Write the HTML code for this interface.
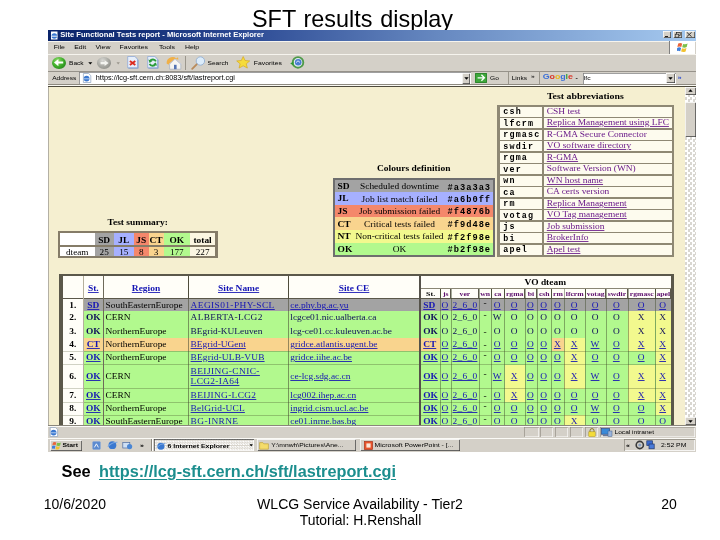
<!DOCTYPE html>
<html><head><meta charset="utf-8"><title>SFT results display</title>
<style>
html,body{margin:0;padding:0;background:#fff;}
body{width:720px;height:540px;position:relative;overflow:hidden;color:#000;}
#wrap{position:absolute;left:0;top:0;width:720px;height:540px;will-change:transform;}
#shot{position:absolute;left:0;top:0;width:720px;height:540px;filter:blur(0.4px);}
.r{position:absolute;display:block;}
.t{position:absolute;white-space:nowrap;line-height:1;margin:0;padding:0;}
.sans{font-family:"Liberation Sans",sans-serif;}
.serif{font-family:"Liberation Serif",serif;}
.mono{font-family:"Liberation Mono",monospace;}
.b{font-weight:bold;}
.u{text-decoration:underline;text-decoration-thickness:0.8px;text-underline-offset:0.8px;}

.sq{transform:scaleY(0.872);}
#lnk{text-decoration-thickness:1.3px;text-underline-offset:1.5px;}
</style></head><body>
<div id="wrap">
<div class="t sans" id="title" style="left:252.0px;top:7.79px;font-size:23.4px;word-spacing:1.3px;">SFT results display</div>
<div id="shot">
<div class="r" style="left:48.00px;top:30.00px;width:647.60px;height:422.00px;background:#d4d0c8;"></div>
<div class="r" style="left:48.00px;top:30.00px;width:647.60px;height:10.50px;background:linear-gradient(90deg,#0a246a 0%,#16327a 15%,#2c4a94 30%,#6688c0 60%,#a6caf0 100%);"></div>
<svg class="r" style="left:50px;top:31px" width="9" height="9" viewBox="0 0 9 9"><rect x="1" y="0.5" width="6.5" height="8" fill="#fff"/><circle cx="4.3" cy="5" r="2.8" fill="#3a78d0"/><path d="M1 5.2h6.5" stroke="#fff" stroke-width="0.9"/></svg>
<div class="t sans b sq" style="left:60.30px;top:31.17px;font-size:7.6px;color:#fff;transform-origin:0 6.43px;">Site Functional Tests report - Microsoft Internet Explorer</div>
<div class="r" style="left:663.00px;top:31.30px;width:8.30px;height:6.90px;background:#d4d0c8;box-shadow:inset 0.7px 0.7px 0 #fff, inset -0.7px -0.7px 0 #404040;"></div>
<div class="r" style="left:673.30px;top:31.30px;width:9.20px;height:6.90px;background:#d4d0c8;box-shadow:inset 0.7px 0.7px 0 #fff, inset -0.7px -0.7px 0 #404040;"></div>
<div class="r" style="left:684.50px;top:31.30px;width:10.00px;height:6.90px;background:#d4d0c8;box-shadow:inset 0.7px 0.7px 0 #fff, inset -0.7px -0.7px 0 #404040;"></div>
<div class="r" style="left:665.00px;top:35.60px;width:3.00px;height:1.00px;background:#222;"></div>
<svg class="r" style="left:674.3px;top:32px" width="8" height="6" viewBox="0 0 8 6"><rect x="2.6" y="0.5" width="3.6" height="3" fill="none" stroke="#222" stroke-width="0.7"/><rect x="1.2" y="2.2" width="3.6" height="3" fill="#d4d0c8" stroke="#222" stroke-width="0.7"/></svg>
<svg class="r" style="left:686.3px;top:32.3px" width="7" height="5" viewBox="0 0 7 5"><path d="M0.8 0.3L5.6 4.7M5.6 0.3L0.8 4.7" stroke="#222" stroke-width="0.9"/></svg>
<div class="r" style="left:48.00px;top:40.50px;width:647.60px;height:1.00px;background:#f6f4ee;"></div>
<div class="t sans sq" style="left:53.70px;top:44.33px;font-size:6.93px;transform-origin:0 5.87px;">File</div>
<div class="t sans sq" style="left:74.20px;top:44.33px;font-size:6.93px;transform-origin:0 5.87px;">Edit</div>
<div class="t sans sq" style="left:95.60px;top:44.33px;font-size:6.93px;transform-origin:0 5.87px;">View</div>
<div class="t sans sq" style="left:119.60px;top:44.33px;font-size:6.93px;transform-origin:0 5.87px;">Favorites</div>
<div class="t sans sq" style="left:158.90px;top:44.33px;font-size:6.93px;transform-origin:0 5.87px;">Tools</div>
<div class="t sans sq" style="left:184.90px;top:44.33px;font-size:6.93px;transform-origin:0 5.87px;">Help</div>
<div class="r" style="left:668.60px;top:41.30px;width:0.90px;height:12.40px;background:#808080;"></div>
<div class="r" style="left:669.50px;top:41.30px;width:25.50px;height:12.40px;background:#fff;"></div>
<svg class="r" style="left:676.5px;top:42.3px" width="12" height="10.5" viewBox="0 0 12 10.5"><path d="M1.2 1.6Q3 0.4 5.2 1.5L4.3 5Q2.4 3.9 0.4 5Z" fill="#e8653a"/><path d="M6.1 1.9Q8.2 2.9 10.6 1.6L9.7 5.1Q7.4 6.3 5.2 5.3Z" fill="#7cc04a"/><path d="M0.2 5.9Q2.2 4.8 4.1 5.9L3.2 9.3Q1.3 8.2 -0.6 9.3Z" fill="#3f7fdc"/><path d="M5 6.2Q7.2 7.2 9.5 6L8.6 9.4Q6.3 10.6 4.1 9.6Z" fill="#f2c230"/></svg>
<div class="r" style="left:48.00px;top:54.00px;width:647.60px;height:1.00px;background:#f6f4ee;"></div>
<div class="r" style="left:51.50px;top:56.55px;width:14.40px;height:12.60px;background:radial-gradient(ellipse at 40% 30%,#8fdc6a 0%,#3fae2a 48%,#1a6e16 100%);border-radius:50%;"></div>
<svg class="r" style="left:51px;top:56.3px" width="16" height="14" viewBox="0 0 16 16" preserveAspectRatio="none"><path d="M3 7.5L7.4 3.4V6.3H12.2V8.7H7.4V11.6Z" fill="#fff"/></svg>
<div class="t sans sq" style="left:69.00px;top:59.81px;font-size:6.6px;transform-origin:0 5.59px;">Back</div>
<svg class="r" style="left:88.2px;top:62px" width="5" height="3" viewBox="0 0 5 3"><path d="M0.3 0.2H4.3L2.3 2.6Z" fill="#000"/></svg>
<div class="r" style="left:97.00px;top:57.10px;width:14.20px;height:11.60px;background:radial-gradient(ellipse at 40% 30%,#d8d8d4 0%,#a8a8a2 50%,#7e7e78 100%);border-radius:50%;"></div>
<svg class="r" style="left:96.6px;top:56.8px" width="16" height="13" viewBox="0 0 16 16" preserveAspectRatio="none"><path d="M11.6 7.5L7.6 3.9V6.2H3.6V8.8H7.6V11.1Z" fill="#f4f4f0"/></svg>
<svg class="r" style="left:116px;top:62px" width="5" height="3" viewBox="0 0 5 3"><path d="M0.5 0.3H3.9L2.2 2.4Z" fill="#9a968c"/></svg>
<svg class="r" style="left:127px;top:56.2px" width="12" height="13" viewBox="0 0 12 13"><path d="M1.4 1.2H8.6L11.4 4V12.6H1.4Z" fill="#6f8fca"/><path d="M0.7 0.5H7.9L10.6 3.2V11.8H0.7Z" fill="#e6eefa" stroke="#86a4d6" stroke-width="0.7"/><path d="M2.9 4.9L8.3 8.9M8.3 4.9L2.9 8.9" stroke="#dc2a1e" stroke-width="1.9"/></svg>
<svg class="r" style="left:147px;top:56.2px" width="12" height="13" viewBox="0 0 12 13"><path d="M1.4 1.2H8.6L11.4 4V12.6H1.4Z" fill="#6f8fca"/><path d="M0.7 0.5H7.9L10.6 3.2V11.8H0.7Z" fill="#e6eefa" stroke="#86a4d6" stroke-width="0.7"/><path d="M8.9 5.4A3.3 3.3 0 0 0 3 5.2M2.6 7.8A3.3 3.3 0 0 0 8.5 8" stroke="#2a9c3a" stroke-width="1.9" fill="none"/><path d="M1.4 3.6L2.6 6.9L5.4 5Z M10 9.7L8.9 6.4L6.1 8.2Z" fill="#2a9c3a"/></svg>
<svg class="r" style="left:165.5px;top:55.6px" width="16" height="14" viewBox="0 0 16 14"><path d="M0.6 7.4Q0.4 2.6 5 1.2Q8.4 0.4 10.2 2.4L12 1.2L12.4 3.6L8.6 3.2L2.6 8.8Z" fill="#f0b048"/><path d="M3.6 8L9 3.2L14.8 8V13.2H3.6Z" fill="#f6f6f2" stroke="#9aa6bc" stroke-width="0.6"/><rect x="8" y="8.8" width="2.6" height="4.4" fill="#5474b4"/><path d="M2.8 8.6L9 3L15.4 8.4" stroke="#c8cede" stroke-width="1" fill="none"/></svg>
<div class="r" style="left:185.20px;top:56.00px;width:0.80px;height:14.00px;background:#9a968c;"></div>
<svg class="r" style="left:190.5px;top:55.8px" width="15" height="14" viewBox="0 0 15 14"><path d="M1.2 12.8L6.4 7.6" stroke="#b98a5a" stroke-width="1.8" stroke-linecap="round"/><circle cx="9.4" cy="5" r="4.2" fill="#dcecfa" stroke="#9ab4d4" stroke-width="1"/></svg>
<div class="t sans sq" style="left:207.50px;top:59.81px;font-size:6.6px;transform-origin:0 5.59px;">Search</div>
<svg class="r" style="left:236px;top:56px" width="14.4" height="12.6" viewBox="0 0 16 14" preserveAspectRatio="none"><path d="M8 0.6L10.1 5L15.2 5.5L11.4 8.7L12.6 13.4L8 10.9L3.4 13.4L4.6 8.7L0.8 5.5L5.9 5Z" fill="#f6dc3c" stroke="#d8aa20" stroke-width="0.8"/></svg>
<div class="t sans sq" style="left:253.80px;top:59.60px;font-size:6.85px;transform-origin:0 5.80px;">Favorites</div>
<svg class="r" style="left:289.5px;top:56.3px" width="16" height="13" viewBox="0 0 16 13"><circle cx="8" cy="6.4" r="5.3" fill="#e4ecf4" stroke="#4f9a4a" stroke-width="1.9"/><path d="M3.4 9.4L0.2 7.4L3.6 5.4Z" fill="#2e9a34"/><circle cx="8.2" cy="6.2" r="3.3" fill="#4a7ed0"/><path d="M6 6.6l2-1.8l2 1.6" stroke="#fff" stroke-width="0.8" fill="none"/></svg>
<div class="r" style="left:48.00px;top:71.00px;width:647.60px;height:1.00px;background:#96928a;"></div>
<div class="t sans sq" style="left:52.20px;top:75.21px;font-size:6.6px;transform-origin:0 5.59px;">Address</div>
<div class="r" style="left:79.00px;top:72.20px;width:392.00px;height:11.80px;background:#fff;box-shadow:inset 0.8px 0.8px 0 #808080;"></div>
<svg class="r" style="left:81.5px;top:73.3px" width="10" height="10" viewBox="0 0 10 10"><path d="M1.4 0.5H6.6L8.8 2.6V9.5H1.4Z" fill="#fff" stroke="#8aa0c0" stroke-width="0.7"/><circle cx="4.6" cy="5.6" r="2.9" fill="#3a78d0"/><path d="M1.6 5.8h6" stroke="#cfe0f6" stroke-width="0.8"/></svg>
<div class="t sans sq" style="left:95.80px;top:74.42px;font-size:7.3px;transform-origin:0 6.18px;">https://lcg-sft.cern.ch:8083/sft/lastreport.cgi</div>
<div class="r" style="left:461.70px;top:73.00px;width:8.70px;height:10.60px;background:#d4d0c8;box-shadow:inset 0.7px 0.7px 0 #fff, inset -0.7px -0.7px 0 #404040;"></div>
<svg class="r" style="left:463.6px;top:77px" width="5" height="3" viewBox="0 0 5 3"><path d="M0.3 0.2H4.7L2.5 2.8Z" fill="#000"/></svg>
<div class="r" style="left:475.30px;top:72.60px;width:11.70px;height:10.80px;background:#3fa83c;border-radius:1px;box-shadow:inset 0 0 0 0.7px #2a7a2a;"></div>
<svg class="r" style="left:477px;top:74.3px" width="9" height="8" viewBox="0 0 9 8"><path d="M0.6 3.8H7M4.4 0.8L7.4 3.8L4.4 6.8" stroke="#fff" stroke-width="1.3" fill="none"/></svg>
<div class="t sans sq" style="left:490.00px;top:75.21px;font-size:6.6px;transform-origin:0 5.59px;">Go</div>
<div class="r" style="left:508.00px;top:72.30px;width:0.80px;height:12.00px;background:#9a968c;"></div>
<div class="t sans sq" style="left:511.70px;top:75.21px;font-size:6.6px;transform-origin:0 5.59px;">Links</div>
<div class="t sans sq" style="left:531.00px;top:73.01px;font-size:6.6px;transform-origin:0 5.59px;">»</div>
<div class="r" style="left:539.30px;top:72.30px;width:0.80px;height:12.00px;background:#9a968c;"></div>
<div class="t sans b" style="left:542.8px;top:72.07px;font-size:8.9px;transform:scaleY(0.9);transform-origin:0 7.53px;letter-spacing:-0.1px"><span style="color:#3a6fd8">G</span><span style="color:#d8382c">o</span><span style="color:#e8b820">o</span><span style="color:#3a6fd8">g</span><span style="color:#3aa040">l</span><span style="color:#d8382c">e</span></div>
<div class="t sans b sq" style="left:575.60px;top:74.07px;font-size:7px;transform-origin:0 5.93px;">-</div>
<div class="r" style="left:582.50px;top:72.50px;width:93.00px;height:11.30px;background:#fff;box-shadow:inset 0.8px 0.8px 0 #808080;"></div>
<div class="t sans sq" style="left:583.80px;top:74.84px;font-size:6.8px;transform-origin:0 5.76px;">lfc</div>
<div class="r" style="left:666.30px;top:73.20px;width:8.70px;height:10.20px;background:#d4d0c8;box-shadow:inset 0.7px 0.7px 0 #fff, inset -0.7px -0.7px 0 #404040;"></div>
<svg class="r" style="left:668.2px;top:77px" width="5" height="3" viewBox="0 0 5 3"><path d="M0.3 0.2H4.7L2.5 2.8Z" fill="#000"/></svg>
<div class="t sans b sq" style="left:677.80px;top:74.24px;font-size:6.8px;color:#2a4ad0;transform-origin:0 5.76px;">»</div>
<div class="r" style="left:48.00px;top:84.00px;width:647.60px;height:0.90px;background:#8e8a80;"></div>
<div class="r" style="left:48.00px;top:84.90px;width:647.60px;height:1.10px;background:#fbfaf4;"></div>
<div class="r" style="left:48.00px;top:86.00px;width:647.60px;height:1.00px;background:#4e4a3c;"></div>
<div class="r" style="left:49.30px;top:87.00px;width:636.00px;height:338.20px;background:#f5efd0;"></div>
<div class="r" style="left:48.00px;top:87.00px;width:1.30px;height:338.20px;background:#b4b0a4;"></div>
<div class="r" style="left:685.30px;top:87.00px;width:10.30px;height:338.20px;background:#e9e7e1;background-image:repeating-conic-gradient(#ffffff 0% 25%, #d9d7d1 0% 50%);background-size:5px 5px;"></div>
<div class="r" style="left:685.30px;top:87.30px;width:10.30px;height:7.60px;background:#d4d0c8;box-shadow:inset 0.7px 0.7px 0 #fff, inset -0.7px -0.7px 0 #404040;"></div>
<div class="r" style="left:685.30px;top:417.40px;width:10.30px;height:7.60px;background:#d4d0c8;box-shadow:inset 0.7px 0.7px 0 #fff, inset -0.7px -0.7px 0 #404040;"></div>
<svg class="r" style="left:687.7px;top:89.3px" width="5" height="3" viewBox="0 0 5 3"><path d="M0.3 2.8H4.7L2.5 0.2Z" fill="#000"/></svg>
<svg class="r" style="left:687.7px;top:420px" width="5" height="3" viewBox="0 0 5 3"><path d="M0.3 0.2H4.7L2.5 2.8Z" fill="#000"/></svg>
<div class="r" style="left:685.30px;top:102.40px;width:10.30px;height:35.10px;background:#d4d0c8;box-shadow:inset 0.7px 0.7px 0 #fff, inset -0.7px -0.7px 0 #404040;"></div>
<div class="t serif b sq" style="left:546.90px;top:90.64px;font-size:9.86px;transform-origin:0 8.26px;">Test abbreviations</div>
<div class="r" style="left:496.70px;top:104.60px;width:177.60px;height:152.60px;background:#8e8874;"></div>
<div class="r" style="left:499.60px;top:106.60px;width:42.10px;height:10.20px;background:#fdfbee;"></div>
<div class="r" style="left:543.70px;top:106.60px;width:128.50px;height:10.20px;background:#fdfbee;"></div>
<div class="t mono b" style="left:503.20px;top:108.46px;font-size:8.4px;letter-spacing:1.2px;">csh</div>
<div class="t serif sq" style="left:546.80px;top:106.83px;font-size:9.4px;color:#6a1a8a;transform-origin:0 7.87px;">CSH test</div>
<div class="r" style="left:499.60px;top:118.10px;width:42.10px;height:10.20px;background:#fdfbee;"></div>
<div class="r" style="left:543.70px;top:118.10px;width:128.50px;height:10.20px;background:#fdfbee;"></div>
<div class="t mono b" style="left:503.20px;top:119.96px;font-size:8.4px;letter-spacing:1.2px;">lfcrm</div>
<div class="t serif u sq" style="left:546.80px;top:118.33px;font-size:9.4px;color:#6a1a8a;transform-origin:0 7.87px;">Replica Management using LFC</div>
<div class="r" style="left:499.60px;top:129.60px;width:42.10px;height:10.20px;background:#fdfbee;"></div>
<div class="r" style="left:543.70px;top:129.60px;width:128.50px;height:10.20px;background:#fdfbee;"></div>
<div class="t mono b" style="left:503.20px;top:131.46px;font-size:8.4px;letter-spacing:1.2px;">rgmasc</div>
<div class="t serif sq" style="left:546.80px;top:129.83px;font-size:9.4px;color:#6a1a8a;transform-origin:0 7.87px;">R-GMA Secure Connector</div>
<div class="r" style="left:499.60px;top:141.10px;width:42.10px;height:10.20px;background:#fdfbee;"></div>
<div class="r" style="left:543.70px;top:141.10px;width:128.50px;height:10.20px;background:#fdfbee;"></div>
<div class="t mono b" style="left:503.20px;top:142.96px;font-size:8.4px;letter-spacing:1.2px;">swdir</div>
<div class="t serif u sq" style="left:546.80px;top:141.33px;font-size:9.4px;color:#6a1a8a;transform-origin:0 7.87px;">VO software directory</div>
<div class="r" style="left:499.60px;top:152.60px;width:42.10px;height:10.20px;background:#fdfbee;"></div>
<div class="r" style="left:543.70px;top:152.60px;width:128.50px;height:10.20px;background:#fdfbee;"></div>
<div class="t mono b" style="left:503.20px;top:154.46px;font-size:8.4px;letter-spacing:1.2px;">rgma</div>
<div class="t serif u sq" style="left:546.80px;top:152.83px;font-size:9.4px;color:#6a1a8a;transform-origin:0 7.87px;">R-GMA</div>
<div class="r" style="left:499.60px;top:164.10px;width:42.10px;height:10.20px;background:#fdfbee;"></div>
<div class="r" style="left:543.70px;top:164.10px;width:128.50px;height:10.20px;background:#fdfbee;"></div>
<div class="t mono b" style="left:503.20px;top:165.96px;font-size:8.4px;letter-spacing:1.2px;">ver</div>
<div class="t serif sq" style="left:546.80px;top:164.33px;font-size:9.4px;color:#6a1a8a;transform-origin:0 7.87px;">Software Version (WN)</div>
<div class="r" style="left:499.60px;top:175.60px;width:42.10px;height:10.20px;background:#fdfbee;"></div>
<div class="r" style="left:543.70px;top:175.60px;width:128.50px;height:10.20px;background:#fdfbee;"></div>
<div class="t mono b" style="left:503.20px;top:177.46px;font-size:8.4px;letter-spacing:1.2px;">wn</div>
<div class="t serif u sq" style="left:546.80px;top:175.83px;font-size:9.4px;color:#6a1a8a;transform-origin:0 7.87px;">WN host name</div>
<div class="r" style="left:499.60px;top:187.10px;width:42.10px;height:10.20px;background:#fdfbee;"></div>
<div class="r" style="left:543.70px;top:187.10px;width:128.50px;height:10.20px;background:#fdfbee;"></div>
<div class="t mono b" style="left:503.20px;top:188.96px;font-size:8.4px;letter-spacing:1.2px;">ca</div>
<div class="t serif sq" style="left:546.80px;top:187.33px;font-size:9.4px;color:#6a1a8a;transform-origin:0 7.87px;">CA certs version</div>
<div class="r" style="left:499.60px;top:198.60px;width:42.10px;height:10.20px;background:#fdfbee;"></div>
<div class="r" style="left:543.70px;top:198.60px;width:128.50px;height:10.20px;background:#fdfbee;"></div>
<div class="t mono b" style="left:503.20px;top:200.46px;font-size:8.4px;letter-spacing:1.2px;">rm</div>
<div class="t serif u sq" style="left:546.80px;top:198.83px;font-size:9.4px;color:#6a1a8a;transform-origin:0 7.87px;">Replica Management</div>
<div class="r" style="left:499.60px;top:210.10px;width:42.10px;height:10.20px;background:#fdfbee;"></div>
<div class="r" style="left:543.70px;top:210.10px;width:128.50px;height:10.20px;background:#fdfbee;"></div>
<div class="t mono b" style="left:503.20px;top:211.96px;font-size:8.4px;letter-spacing:1.2px;">votag</div>
<div class="t serif u sq" style="left:546.80px;top:210.33px;font-size:9.4px;color:#6a1a8a;transform-origin:0 7.87px;">VO Tag management</div>
<div class="r" style="left:499.60px;top:221.60px;width:42.10px;height:10.20px;background:#fdfbee;"></div>
<div class="r" style="left:543.70px;top:221.60px;width:128.50px;height:10.20px;background:#fdfbee;"></div>
<div class="t mono b" style="left:503.20px;top:223.46px;font-size:8.4px;letter-spacing:1.2px;">js</div>
<div class="t serif u sq" style="left:546.80px;top:221.83px;font-size:9.4px;color:#6a1a8a;transform-origin:0 7.87px;">Job submission</div>
<div class="r" style="left:499.60px;top:233.10px;width:42.10px;height:10.20px;background:#fdfbee;"></div>
<div class="r" style="left:543.70px;top:233.10px;width:128.50px;height:10.20px;background:#fdfbee;"></div>
<div class="t mono b" style="left:503.20px;top:234.96px;font-size:8.4px;letter-spacing:1.2px;">bi</div>
<div class="t serif u sq" style="left:546.80px;top:233.33px;font-size:9.4px;color:#6a1a8a;transform-origin:0 7.87px;">BrokerInfo</div>
<div class="r" style="left:499.60px;top:244.60px;width:42.10px;height:10.20px;background:#fdfbee;"></div>
<div class="r" style="left:543.70px;top:244.60px;width:128.50px;height:10.20px;background:#fdfbee;"></div>
<div class="t mono b" style="left:503.20px;top:246.46px;font-size:8.4px;letter-spacing:1.2px;">apel</div>
<div class="t serif u sq" style="left:546.80px;top:244.83px;font-size:9.4px;color:#6a1a8a;transform-origin:0 7.87px;">Apel test</div>
<div class="t serif b sq" style="left:377.00px;top:164.26px;font-size:9.48px;transform-origin:0 7.94px;">Colours definition</div>
<div class="r" style="left:333.00px;top:178.00px;width:161.50px;height:79.00px;background:#6e6e6e;"></div>
<div class="r" style="left:335.00px;top:180.00px;width:157.50px;height:12.20px;background:#a3a3a3;"></div>
<div class="t serif b sq" style="left:337.50px;top:182.24px;font-size:9.5px;transform-origin:0 7.96px;">SD</div>
<div class="t serif sq" style="left:354.00px;top:182.33px;font-size:9.4px;width:91.00px;text-align:center;transform-origin:0 7.87px;">Scheduled downtime</div>
<div class="t mono b" style="left:447.60px;top:183.53px;font-size:8.7px;letter-spacing:1.0px;">#a3a3a3</div>
<div class="r" style="left:335.00px;top:192.20px;width:157.50px;height:12.50px;background:#a6b0ff;"></div>
<div class="t serif b sq" style="left:337.50px;top:194.44px;font-size:9.5px;transform-origin:0 7.96px;">JL</div>
<div class="t serif sq" style="left:354.00px;top:194.53px;font-size:9.4px;width:91.00px;text-align:center;transform-origin:0 7.87px;">Job list match failed</div>
<div class="t mono b" style="left:447.60px;top:195.73px;font-size:8.7px;letter-spacing:1.0px;">#a6b0ff</div>
<div class="r" style="left:335.00px;top:204.70px;width:157.50px;height:12.70px;background:#f4876b;"></div>
<div class="t serif b sq" style="left:337.50px;top:206.94px;font-size:9.5px;transform-origin:0 7.96px;">JS</div>
<div class="t serif sq" style="left:354.00px;top:207.03px;font-size:9.4px;width:91.00px;text-align:center;transform-origin:0 7.87px;">Job submission failed</div>
<div class="t mono b" style="left:447.60px;top:208.23px;font-size:8.7px;letter-spacing:1.0px;">#f4876b</div>
<div class="r" style="left:335.00px;top:217.40px;width:157.50px;height:12.60px;background:#f9d48e;"></div>
<div class="t serif b sq" style="left:337.50px;top:219.64px;font-size:9.5px;transform-origin:0 7.96px;">CT</div>
<div class="t serif sq" style="left:354.00px;top:219.73px;font-size:9.4px;width:91.00px;text-align:center;transform-origin:0 7.87px;">Critical tests failed</div>
<div class="t mono b" style="left:447.60px;top:220.93px;font-size:8.7px;letter-spacing:1.0px;">#f9d48e</div>
<div class="r" style="left:335.00px;top:230.00px;width:157.50px;height:12.60px;background:#f2f98e;"></div>
<div class="t serif b sq" style="left:337.50px;top:232.24px;font-size:9.5px;transform-origin:0 7.96px;">NT</div>
<div class="t serif sq" style="left:354.00px;top:232.33px;font-size:9.4px;width:91.00px;text-align:center;transform-origin:0 7.87px;">Non-critical tests failed</div>
<div class="t mono b" style="left:447.60px;top:233.53px;font-size:8.7px;letter-spacing:1.0px;">#f2f98e</div>
<div class="r" style="left:335.00px;top:242.60px;width:157.50px;height:12.70px;background:#b2f98e;"></div>
<div class="t serif b sq" style="left:337.50px;top:244.84px;font-size:9.5px;transform-origin:0 7.96px;">OK</div>
<div class="t serif sq" style="left:354.00px;top:244.93px;font-size:9.4px;width:91.00px;text-align:center;transform-origin:0 7.87px;">OK</div>
<div class="t mono b" style="left:447.60px;top:246.13px;font-size:8.7px;letter-spacing:1.0px;">#b2f98e</div>
<div class="t serif b sq" style="left:107.50px;top:218.26px;font-size:9.48px;transform-origin:0 7.94px;">Test summary:</div>
<div class="r" style="left:57.50px;top:231.20px;width:160.00px;height:26.80px;background:#857c68;"></div>
<div class="r" style="left:60.00px;top:233.20px;width:34.50px;height:11.80px;background:#ffffff;"></div>
<div class="r" style="left:60.00px;top:247.00px;width:34.50px;height:8.80px;background:#ffffff;"></div>
<div class="t serif sq" style="left:60.00px;top:247.89px;font-size:9.2px;width:34.50px;text-align:center;transform-origin:0 7.70px;">dteam</div>
<div class="r" style="left:94.50px;top:233.20px;width:19.30px;height:11.80px;background:#a3a3a3;"></div>
<div class="r" style="left:94.50px;top:247.00px;width:19.30px;height:8.80px;background:#a3a3a3;"></div>
<div class="t serif b sq" style="left:94.50px;top:235.63px;font-size:9.4px;width:19.30px;text-align:center;transform-origin:0 7.87px;">SD</div>
<div class="t serif sq" style="left:94.50px;top:247.89px;font-size:9.2px;width:19.30px;text-align:center;transform-origin:0 7.70px;">25</div>
<div class="r" style="left:113.80px;top:233.20px;width:20.10px;height:11.80px;background:#a6b0ff;"></div>
<div class="r" style="left:113.80px;top:247.00px;width:20.10px;height:8.80px;background:#a6b0ff;"></div>
<div class="t serif b sq" style="left:113.80px;top:235.63px;font-size:9.4px;width:20.10px;text-align:center;transform-origin:0 7.87px;">JL</div>
<div class="t serif sq" style="left:113.80px;top:247.89px;font-size:9.2px;width:20.10px;text-align:center;transform-origin:0 7.70px;">15</div>
<div class="r" style="left:133.90px;top:233.20px;width:14.70px;height:11.80px;background:#f4876b;"></div>
<div class="r" style="left:133.90px;top:247.00px;width:14.70px;height:8.80px;background:#f4876b;"></div>
<div class="t serif b sq" style="left:133.90px;top:235.63px;font-size:9.4px;width:14.70px;text-align:center;transform-origin:0 7.87px;">JS</div>
<div class="t serif sq" style="left:133.90px;top:247.89px;font-size:9.2px;width:14.70px;text-align:center;transform-origin:0 7.70px;">8</div>
<div class="r" style="left:148.60px;top:233.20px;width:15.00px;height:11.80px;background:#f9d48e;"></div>
<div class="r" style="left:148.60px;top:247.00px;width:15.00px;height:8.80px;background:#f9d48e;"></div>
<div class="t serif b sq" style="left:148.60px;top:235.63px;font-size:9.4px;width:15.00px;text-align:center;transform-origin:0 7.87px;">CT</div>
<div class="t serif sq" style="left:148.60px;top:247.89px;font-size:9.2px;width:15.00px;text-align:center;transform-origin:0 7.70px;">3</div>
<div class="r" style="left:163.60px;top:233.20px;width:26.40px;height:11.80px;background:#b2f98e;"></div>
<div class="r" style="left:163.60px;top:247.00px;width:26.40px;height:8.80px;background:#b2f98e;"></div>
<div class="t serif b sq" style="left:163.60px;top:235.63px;font-size:9.4px;width:26.40px;text-align:center;transform-origin:0 7.87px;">OK</div>
<div class="t serif sq" style="left:163.60px;top:247.89px;font-size:9.2px;width:26.40px;text-align:center;transform-origin:0 7.70px;">177</div>
<div class="r" style="left:190.00px;top:233.20px;width:25.20px;height:11.80px;background:#fbf6e2;"></div>
<div class="r" style="left:190.00px;top:247.00px;width:25.20px;height:8.80px;background:#fbf6e2;"></div>
<div class="t serif b sq" style="left:190.00px;top:235.63px;font-size:9.4px;width:25.20px;text-align:center;transform-origin:0 7.87px;">total</div>
<div class="t serif sq" style="left:190.00px;top:247.89px;font-size:9.2px;width:25.20px;text-align:center;transform-origin:0 7.70px;">227</div>
<div class="r" style="left:59.20px;top:274.20px;width:614.40px;height:151.00px;background:#5b584a;"></div>
<div class="r" style="left:63.00px;top:276.40px;width:20.40px;height:21.40px;background:#fffef8;"></div>
<div class="r" style="left:84.20px;top:276.40px;width:18.40px;height:21.40px;background:#fffef8;"></div>
<div class="r" style="left:103.80px;top:276.40px;width:84.40px;height:21.40px;background:#fffef8;"></div>
<div class="r" style="left:188.90px;top:276.40px;width:99.30px;height:21.40px;background:#fffef8;"></div>
<div class="r" style="left:288.90px;top:276.40px;width:130.10px;height:21.40px;background:#fffef8;"></div>
<div class="r" style="left:420.80px;top:276.40px;width:250.00px;height:11.60px;background:#fffef8;"></div>
<div class="r" style="left:420.90px;top:288.90px;width:19.10px;height:8.90px;background:#fffef8;"></div>
<div class="t serif b sq" style="left:420.60px;top:289.70px;font-size:8.0px;width:20.00px;text-align:center;transform-origin:0 6.70px;">St.</div>
<div class="r" style="left:440.90px;top:288.90px;width:9.50px;height:8.90px;background:#fffef8;"></div>
<div class="t serif b sq" style="left:437.60px;top:289.95px;font-size:7.7px;color:#5a0a6a;width:16.40px;text-align:center;transform-origin:0 6.45px;">js</div>
<div class="r" style="left:451.30px;top:288.90px;width:27.00px;height:8.90px;background:#fffef8;"></div>
<div class="t serif b sq" style="left:448.00px;top:289.95px;font-size:7.7px;color:#5a0a6a;width:33.90px;text-align:center;transform-origin:0 6.45px;">ver</div>
<div class="r" style="left:479.20px;top:288.90px;width:11.50px;height:8.90px;background:#fffef8;"></div>
<div class="t serif b sq" style="left:475.90px;top:289.95px;font-size:7.7px;color:#5a0a6a;width:18.40px;text-align:center;transform-origin:0 6.45px;">wn</div>
<div class="r" style="left:491.60px;top:288.90px;width:12.20px;height:8.90px;background:#fffef8;"></div>
<div class="t serif b sq" style="left:488.30px;top:289.95px;font-size:7.7px;color:#5a0a6a;width:19.10px;text-align:center;transform-origin:0 6.45px;">ca</div>
<div class="r" style="left:504.70px;top:288.90px;width:19.70px;height:8.90px;background:#fffef8;"></div>
<div class="t serif b sq" style="left:501.40px;top:289.95px;font-size:7.7px;color:#5a0a6a;width:26.60px;text-align:center;transform-origin:0 6.45px;">rgma</div>
<div class="r" style="left:525.30px;top:288.90px;width:11.00px;height:8.90px;background:#fffef8;"></div>
<div class="t serif b sq" style="left:522.00px;top:289.95px;font-size:7.7px;color:#5a0a6a;width:17.90px;text-align:center;transform-origin:0 6.45px;">bi</div>
<div class="r" style="left:537.20px;top:288.90px;width:13.90px;height:8.90px;background:#fffef8;"></div>
<div class="t serif b sq" style="left:533.90px;top:289.95px;font-size:7.7px;color:#5a0a6a;width:20.80px;text-align:center;transform-origin:0 6.45px;">csh</div>
<div class="r" style="left:552.00px;top:288.90px;width:11.50px;height:8.90px;background:#fffef8;"></div>
<div class="t serif b sq" style="left:548.70px;top:289.95px;font-size:7.7px;color:#5a0a6a;width:18.40px;text-align:center;transform-origin:0 6.45px;">rm</div>
<div class="r" style="left:564.40px;top:288.90px;width:20.40px;height:8.90px;background:#fffef8;"></div>
<div class="t serif b sq" style="left:561.10px;top:289.95px;font-size:7.7px;color:#5a0a6a;width:27.30px;text-align:center;transform-origin:0 6.45px;">lfcrm</div>
<div class="r" style="left:585.70px;top:288.90px;width:19.60px;height:8.90px;background:#fffef8;"></div>
<div class="t serif b sq" style="left:582.40px;top:289.95px;font-size:7.7px;color:#5a0a6a;width:26.50px;text-align:center;transform-origin:0 6.45px;">votag</div>
<div class="r" style="left:606.20px;top:288.90px;width:21.10px;height:8.90px;background:#fffef8;"></div>
<div class="t serif b sq" style="left:602.90px;top:289.95px;font-size:7.7px;color:#5a0a6a;width:28.00px;text-align:center;transform-origin:0 6.45px;">swdir</div>
<div class="r" style="left:628.20px;top:288.90px;width:26.90px;height:8.90px;background:#fffef8;"></div>
<div class="t serif b sq" style="left:624.90px;top:289.95px;font-size:7.7px;color:#5a0a6a;width:33.80px;text-align:center;transform-origin:0 6.45px;">rgmasc</div>
<div class="r" style="left:656.00px;top:288.90px;width:14.20px;height:8.90px;background:#fffef8;"></div>
<div class="t serif b sq" style="left:652.70px;top:289.95px;font-size:7.7px;color:#5a0a6a;width:21.10px;text-align:center;transform-origin:0 6.45px;">apel</div>
<div class="t serif b u sq" style="left:84.00px;top:283.59px;font-size:9.45px;color:#1414b4;width:18.60px;text-align:center;transform-origin:0 7.91px;">St.</div>
<div class="t serif b u sq" style="left:103.60px;top:283.59px;font-size:9.45px;color:#1414b4;width:84.80px;text-align:center;transform-origin:0 7.91px;">Region</div>
<div class="t serif b u sq" style="left:188.80px;top:283.59px;font-size:9.45px;color:#1414b4;width:99.60px;text-align:center;transform-origin:0 7.91px;">Site Name</div>
<div class="t serif b u sq" style="left:288.80px;top:283.59px;font-size:9.45px;color:#1414b4;width:130.40px;text-align:center;transform-origin:0 7.91px;">Site CE</div>
<div class="t serif b sq" style="left:420.60px;top:277.79px;font-size:9.44px;width:249.40px;text-align:center;transform-origin:0 7.91px;">VO dteam</div>
<div class="r" style="left:63.00px;top:299.00px;width:20.40px;height:12.40px;background:#fffef8;"></div>
<div class="t serif b sq" style="left:63.00px;top:300.53px;font-size:9.4px;width:19.50px;text-align:center;transform-origin:0 7.87px;">1.</div>
<div class="r" style="left:84.20px;top:299.00px;width:335.00px;height:12.40px;background:#a3a3a3;"></div>
<div class="r" style="left:420.80px;top:299.00px;width:250.00px;height:12.40px;background:#a3a3a3;"></div>
<div class="t serif b u sq" style="left:84.00px;top:300.53px;font-size:9.4px;color:#1414b4;width:18.60px;text-align:center;transform-origin:0 7.87px;">SD</div>
<div class="t serif sq" style="left:105.60px;top:300.53px;font-size:9.4px;transform-origin:0 7.87px;">SouthEasternEurope</div>
<div class="t serif u sq" style="left:190.60px;top:300.53px;font-size:9.4px;color:#1414b4;letter-spacing:0.40px;transform-origin:0 7.87px;">AEGIS01-PHY-SCL</div>
<div class="t serif u sq" style="left:290.30px;top:300.53px;font-size:9.4px;color:#1414b4;transform-origin:0 7.87px;">ce.phy.bg.ac.yu</div>
<div class="t serif b u sq" style="left:423.20px;top:300.53px;font-size:9.4px;color:#1414b4;transform-origin:0 7.87px;">SD</div>
<div class="t serif u sq" style="left:439.80px;top:300.53px;font-size:9.4px;color:#1414b4;width:10.40px;text-align:center;transform-origin:0 7.87px;">O</div>
<div class="t serif u sq" style="left:451.00px;top:300.53px;font-size:9.4px;color:#1414b4;width:27.90px;text-align:center;letter-spacing:0.3px;transform-origin:0 7.87px;">2_6_0</div>
<div class="t serif sq" style="left:478.90px;top:298.53px;font-size:9.4px;width:12.40px;text-align:center;transform-origin:0 7.87px;">-</div>
<div class="t serif u sq" style="left:490.70px;top:300.53px;font-size:9.4px;color:#1414b4;width:13.10px;text-align:center;transform-origin:0 7.87px;">O</div>
<div class="t serif u sq" style="left:503.80px;top:300.53px;font-size:9.4px;color:#1414b4;width:20.60px;text-align:center;transform-origin:0 7.87px;">O</div>
<div class="t serif u sq" style="left:524.40px;top:300.53px;font-size:9.4px;color:#1414b4;width:11.90px;text-align:center;transform-origin:0 7.87px;">O</div>
<div class="t serif u sq" style="left:536.30px;top:300.53px;font-size:9.4px;color:#1414b4;width:14.80px;text-align:center;transform-origin:0 7.87px;">O</div>
<div class="t serif u sq" style="left:551.10px;top:300.53px;font-size:9.4px;color:#1414b4;width:12.40px;text-align:center;transform-origin:0 7.87px;">O</div>
<div class="t serif u sq" style="left:563.50px;top:300.53px;font-size:9.4px;color:#1414b4;width:21.30px;text-align:center;transform-origin:0 7.87px;">O</div>
<div class="t serif u sq" style="left:584.80px;top:300.53px;font-size:9.4px;color:#1414b4;width:20.50px;text-align:center;transform-origin:0 7.87px;">O</div>
<div class="t serif u sq" style="left:605.30px;top:300.53px;font-size:9.4px;color:#1414b4;width:22.00px;text-align:center;transform-origin:0 7.87px;">O</div>
<div class="t serif u sq" style="left:627.30px;top:300.53px;font-size:9.4px;color:#1414b4;width:27.80px;text-align:center;transform-origin:0 7.87px;">O</div>
<div class="t serif u sq" style="left:655.10px;top:300.53px;font-size:9.4px;color:#1414b4;width:15.10px;text-align:center;transform-origin:0 7.87px;">O</div>
<div class="r" style="left:63.00px;top:311.40px;width:20.40px;height:13.30px;background:#fffef8;"></div>
<div class="t serif b sq" style="left:63.00px;top:313.38px;font-size:9.4px;width:19.50px;text-align:center;transform-origin:0 7.87px;">2.</div>
<div class="r" style="left:84.20px;top:311.40px;width:335.00px;height:13.30px;background:#b2f98e;"></div>
<div class="r" style="left:420.80px;top:311.40px;width:250.00px;height:13.30px;background:#b2f98e;"></div>
<div class="r" style="left:628.20px;top:311.40px;width:27.20px;height:13.30px;background:#f2f98e;"></div>
<div class="r" style="left:656.00px;top:311.40px;width:14.50px;height:13.30px;background:#f2f98e;"></div>
<div class="t serif b sq" style="left:84.00px;top:313.38px;font-size:9.4px;color:#0e0e5a;width:18.60px;text-align:center;transform-origin:0 7.87px;">OK</div>
<div class="t serif sq" style="left:105.60px;top:313.38px;font-size:9.4px;transform-origin:0 7.87px;">CERN</div>
<div class="t serif sq" style="left:190.60px;top:313.38px;font-size:9.4px;color:#0e0e5a;letter-spacing:0.30px;transform-origin:0 7.87px;">ALBERTA-LCG2</div>
<div class="t serif sq" style="left:290.30px;top:313.38px;font-size:9.4px;color:#0e0e5a;transform-origin:0 7.87px;">lcgce01.nic.ualberta.ca</div>
<div class="t serif b sq" style="left:423.20px;top:313.38px;font-size:9.4px;color:#0e0e5a;transform-origin:0 7.87px;">OK</div>
<div class="t serif sq" style="left:439.80px;top:313.38px;font-size:9.4px;color:#0e0e5a;width:10.40px;text-align:center;transform-origin:0 7.87px;">O</div>
<div class="t serif sq" style="left:451.00px;top:313.38px;font-size:9.4px;color:#0e0e5a;width:27.90px;text-align:center;letter-spacing:0.3px;transform-origin:0 7.87px;">2_6_0</div>
<div class="t serif sq" style="left:478.90px;top:311.38px;font-size:9.4px;width:12.40px;text-align:center;transform-origin:0 7.87px;">-</div>
<div class="t serif sq" style="left:490.70px;top:313.38px;font-size:9.4px;color:#0e0e5a;width:13.10px;text-align:center;transform-origin:0 7.87px;">W</div>
<div class="t serif sq" style="left:503.80px;top:313.38px;font-size:9.4px;color:#0e0e5a;width:20.60px;text-align:center;transform-origin:0 7.87px;">O</div>
<div class="t serif sq" style="left:524.40px;top:313.38px;font-size:9.4px;color:#0e0e5a;width:11.90px;text-align:center;transform-origin:0 7.87px;">O</div>
<div class="t serif sq" style="left:536.30px;top:313.38px;font-size:9.4px;color:#0e0e5a;width:14.80px;text-align:center;transform-origin:0 7.87px;">O</div>
<div class="t serif sq" style="left:551.10px;top:313.38px;font-size:9.4px;color:#0e0e5a;width:12.40px;text-align:center;transform-origin:0 7.87px;">O</div>
<div class="t serif sq" style="left:563.50px;top:313.38px;font-size:9.4px;color:#0e0e5a;width:21.30px;text-align:center;transform-origin:0 7.87px;">O</div>
<div class="t serif sq" style="left:584.80px;top:313.38px;font-size:9.4px;color:#0e0e5a;width:20.50px;text-align:center;transform-origin:0 7.87px;">O</div>
<div class="t serif sq" style="left:605.30px;top:313.38px;font-size:9.4px;color:#0e0e5a;width:22.00px;text-align:center;transform-origin:0 7.87px;">O</div>
<div class="t serif sq" style="left:627.30px;top:313.38px;font-size:9.4px;color:#0e0e5a;width:27.80px;text-align:center;transform-origin:0 7.87px;">X</div>
<div class="t serif sq" style="left:655.10px;top:313.38px;font-size:9.4px;color:#0e0e5a;width:15.10px;text-align:center;transform-origin:0 7.87px;">X</div>
<div class="r" style="left:63.00px;top:324.70px;width:20.40px;height:13.20px;background:#fffef8;"></div>
<div class="t serif b sq" style="left:63.00px;top:326.63px;font-size:9.4px;width:19.50px;text-align:center;transform-origin:0 7.87px;">3.</div>
<div class="r" style="left:84.20px;top:324.70px;width:335.00px;height:13.20px;background:#b2f98e;"></div>
<div class="r" style="left:420.80px;top:324.70px;width:250.00px;height:13.20px;background:#b2f98e;"></div>
<div class="r" style="left:628.20px;top:324.70px;width:27.20px;height:13.20px;background:#f2f98e;"></div>
<div class="r" style="left:656.00px;top:324.70px;width:14.50px;height:13.20px;background:#f2f98e;"></div>
<div class="t serif b sq" style="left:84.00px;top:326.63px;font-size:9.4px;color:#0e0e5a;width:18.60px;text-align:center;transform-origin:0 7.87px;">OK</div>
<div class="t serif sq" style="left:105.60px;top:326.63px;font-size:9.4px;transform-origin:0 7.87px;">NorthernEurope</div>
<div class="t serif sq" style="left:190.60px;top:326.63px;font-size:9.4px;color:#0e0e5a;transform-origin:0 7.87px;">BEgrid-KULeuven</div>
<div class="t serif sq" style="left:290.30px;top:326.63px;font-size:9.4px;color:#0e0e5a;transform-origin:0 7.87px;">lcg-ce01.cc.kuleuven.ac.be</div>
<div class="t serif b sq" style="left:423.20px;top:326.63px;font-size:9.4px;color:#0e0e5a;transform-origin:0 7.87px;">OK</div>
<div class="t serif sq" style="left:439.80px;top:326.63px;font-size:9.4px;color:#0e0e5a;width:10.40px;text-align:center;transform-origin:0 7.87px;">O</div>
<div class="t serif sq" style="left:451.00px;top:326.63px;font-size:9.4px;color:#0e0e5a;width:27.90px;text-align:center;letter-spacing:0.3px;transform-origin:0 7.87px;">2_6_0</div>
<div class="t serif sq" style="left:478.90px;top:328.13px;font-size:9.4px;width:12.40px;text-align:center;transform-origin:0 7.87px;">-</div>
<div class="t serif sq" style="left:490.70px;top:326.63px;font-size:9.4px;color:#0e0e5a;width:13.10px;text-align:center;transform-origin:0 7.87px;">O</div>
<div class="t serif sq" style="left:503.80px;top:326.63px;font-size:9.4px;color:#0e0e5a;width:20.60px;text-align:center;transform-origin:0 7.87px;">O</div>
<div class="t serif sq" style="left:524.40px;top:326.63px;font-size:9.4px;color:#0e0e5a;width:11.90px;text-align:center;transform-origin:0 7.87px;">O</div>
<div class="t serif sq" style="left:536.30px;top:326.63px;font-size:9.4px;color:#0e0e5a;width:14.80px;text-align:center;transform-origin:0 7.87px;">O</div>
<div class="t serif sq" style="left:551.10px;top:326.63px;font-size:9.4px;color:#0e0e5a;width:12.40px;text-align:center;transform-origin:0 7.87px;">O</div>
<div class="t serif sq" style="left:563.50px;top:326.63px;font-size:9.4px;color:#0e0e5a;width:21.30px;text-align:center;transform-origin:0 7.87px;">O</div>
<div class="t serif sq" style="left:584.80px;top:326.63px;font-size:9.4px;color:#0e0e5a;width:20.50px;text-align:center;transform-origin:0 7.87px;">O</div>
<div class="t serif sq" style="left:605.30px;top:326.63px;font-size:9.4px;color:#0e0e5a;width:22.00px;text-align:center;transform-origin:0 7.87px;">O</div>
<div class="t serif sq" style="left:627.30px;top:326.63px;font-size:9.4px;color:#0e0e5a;width:27.80px;text-align:center;transform-origin:0 7.87px;">X</div>
<div class="t serif sq" style="left:655.10px;top:326.63px;font-size:9.4px;color:#0e0e5a;width:15.10px;text-align:center;transform-origin:0 7.87px;">X</div>
<div class="r" style="left:63.00px;top:337.90px;width:20.40px;height:13.40px;background:#fffef8;"></div>
<div class="t serif b sq" style="left:63.00px;top:339.93px;font-size:9.4px;width:19.50px;text-align:center;transform-origin:0 7.87px;">4.</div>
<div class="r" style="left:84.20px;top:337.90px;width:335.00px;height:13.40px;background:#f9d48e;"></div>
<div class="r" style="left:420.80px;top:337.90px;width:250.00px;height:13.40px;background:#b2f98e;"></div>
<div class="r" style="left:420.80px;top:337.90px;width:19.60px;height:13.40px;background:#f9d48e;"></div>
<div class="r" style="left:552.00px;top:337.90px;width:11.80px;height:13.40px;background:#f9d48e;"></div>
<div class="r" style="left:564.40px;top:337.90px;width:20.70px;height:13.40px;background:#f2f98e;"></div>
<div class="r" style="left:628.20px;top:337.90px;width:27.20px;height:13.40px;background:#f2f98e;"></div>
<div class="r" style="left:656.00px;top:337.90px;width:14.50px;height:13.40px;background:#f2f98e;"></div>
<div class="t serif b u sq" style="left:84.00px;top:339.93px;font-size:9.4px;color:#1414b4;width:18.60px;text-align:center;transform-origin:0 7.87px;">CT</div>
<div class="t serif sq" style="left:105.60px;top:339.93px;font-size:9.4px;transform-origin:0 7.87px;">NorthernEurope</div>
<div class="t serif u sq" style="left:190.60px;top:339.93px;font-size:9.4px;color:#1414b4;transform-origin:0 7.87px;">BEgrid-UGent</div>
<div class="t serif u sq" style="left:290.30px;top:339.93px;font-size:9.4px;color:#1414b4;transform-origin:0 7.87px;">gridce.atlantis.ugent.be</div>
<div class="t serif b u sq" style="left:423.20px;top:339.93px;font-size:9.4px;color:#1414b4;transform-origin:0 7.87px;">CT</div>
<div class="t serif u sq" style="left:439.80px;top:339.93px;font-size:9.4px;color:#1414b4;width:10.40px;text-align:center;transform-origin:0 7.87px;">O</div>
<div class="t serif u sq" style="left:451.00px;top:339.93px;font-size:9.4px;color:#1414b4;width:27.90px;text-align:center;letter-spacing:0.3px;transform-origin:0 7.87px;">2_6_0</div>
<div class="t serif sq" style="left:478.90px;top:341.43px;font-size:9.4px;width:12.40px;text-align:center;transform-origin:0 7.87px;">-</div>
<div class="t serif u sq" style="left:490.70px;top:339.93px;font-size:9.4px;color:#1414b4;width:13.10px;text-align:center;transform-origin:0 7.87px;">O</div>
<div class="t serif u sq" style="left:503.80px;top:339.93px;font-size:9.4px;color:#1414b4;width:20.60px;text-align:center;transform-origin:0 7.87px;">O</div>
<div class="t serif u sq" style="left:524.40px;top:339.93px;font-size:9.4px;color:#1414b4;width:11.90px;text-align:center;transform-origin:0 7.87px;">O</div>
<div class="t serif u sq" style="left:536.30px;top:339.93px;font-size:9.4px;color:#1414b4;width:14.80px;text-align:center;transform-origin:0 7.87px;">O</div>
<div class="t serif u sq" style="left:551.10px;top:339.93px;font-size:9.4px;color:#1414b4;width:12.40px;text-align:center;transform-origin:0 7.87px;">X</div>
<div class="t serif u sq" style="left:563.50px;top:339.93px;font-size:9.4px;color:#1414b4;width:21.30px;text-align:center;transform-origin:0 7.87px;">X</div>
<div class="t serif u sq" style="left:584.80px;top:339.93px;font-size:9.4px;color:#1414b4;width:20.50px;text-align:center;transform-origin:0 7.87px;">W</div>
<div class="t serif u sq" style="left:605.30px;top:339.93px;font-size:9.4px;color:#1414b4;width:22.00px;text-align:center;transform-origin:0 7.87px;">O</div>
<div class="t serif u sq" style="left:627.30px;top:339.93px;font-size:9.4px;color:#1414b4;width:27.80px;text-align:center;transform-origin:0 7.87px;">X</div>
<div class="t serif u sq" style="left:655.10px;top:339.93px;font-size:9.4px;color:#1414b4;width:15.10px;text-align:center;transform-origin:0 7.87px;">X</div>
<div class="r" style="left:63.00px;top:351.30px;width:20.40px;height:13.30px;background:#fffef8;"></div>
<div class="t serif b sq" style="left:63.00px;top:353.28px;font-size:9.4px;width:19.50px;text-align:center;transform-origin:0 7.87px;">5.</div>
<div class="r" style="left:84.20px;top:351.30px;width:335.00px;height:13.30px;background:#b2f98e;"></div>
<div class="r" style="left:420.80px;top:351.30px;width:250.00px;height:13.30px;background:#b2f98e;"></div>
<div class="r" style="left:564.40px;top:351.30px;width:20.70px;height:13.30px;background:#f2f98e;"></div>
<div class="r" style="left:656.00px;top:351.30px;width:14.50px;height:13.30px;background:#f2f98e;"></div>
<div class="t serif b u sq" style="left:84.00px;top:353.28px;font-size:9.4px;color:#1414b4;width:18.60px;text-align:center;transform-origin:0 7.87px;">OK</div>
<div class="t serif sq" style="left:105.60px;top:353.28px;font-size:9.4px;transform-origin:0 7.87px;">NorthernEurope</div>
<div class="t serif u sq" style="left:190.60px;top:353.28px;font-size:9.4px;color:#1414b4;letter-spacing:0.15px;transform-origin:0 7.87px;">BEgrid-ULB-VUB</div>
<div class="t serif u sq" style="left:290.30px;top:353.28px;font-size:9.4px;color:#1414b4;transform-origin:0 7.87px;">gridce.iihe.ac.be</div>
<div class="t serif b u sq" style="left:423.20px;top:353.28px;font-size:9.4px;color:#1414b4;transform-origin:0 7.87px;">OK</div>
<div class="t serif u sq" style="left:439.80px;top:353.28px;font-size:9.4px;color:#1414b4;width:10.40px;text-align:center;transform-origin:0 7.87px;">O</div>
<div class="t serif u sq" style="left:451.00px;top:353.28px;font-size:9.4px;color:#1414b4;width:27.90px;text-align:center;letter-spacing:0.3px;transform-origin:0 7.87px;">2_6_0</div>
<div class="t serif sq" style="left:478.90px;top:351.28px;font-size:9.4px;width:12.40px;text-align:center;transform-origin:0 7.87px;">-</div>
<div class="t serif u sq" style="left:490.70px;top:353.28px;font-size:9.4px;color:#1414b4;width:13.10px;text-align:center;transform-origin:0 7.87px;">O</div>
<div class="t serif u sq" style="left:503.80px;top:353.28px;font-size:9.4px;color:#1414b4;width:20.60px;text-align:center;transform-origin:0 7.87px;">O</div>
<div class="t serif u sq" style="left:524.40px;top:353.28px;font-size:9.4px;color:#1414b4;width:11.90px;text-align:center;transform-origin:0 7.87px;">O</div>
<div class="t serif u sq" style="left:536.30px;top:353.28px;font-size:9.4px;color:#1414b4;width:14.80px;text-align:center;transform-origin:0 7.87px;">O</div>
<div class="t serif u sq" style="left:551.10px;top:353.28px;font-size:9.4px;color:#1414b4;width:12.40px;text-align:center;transform-origin:0 7.87px;">O</div>
<div class="t serif u sq" style="left:563.50px;top:353.28px;font-size:9.4px;color:#1414b4;width:21.30px;text-align:center;transform-origin:0 7.87px;">X</div>
<div class="t serif u sq" style="left:584.80px;top:353.28px;font-size:9.4px;color:#1414b4;width:20.50px;text-align:center;transform-origin:0 7.87px;">O</div>
<div class="t serif u sq" style="left:605.30px;top:353.28px;font-size:9.4px;color:#1414b4;width:22.00px;text-align:center;transform-origin:0 7.87px;">O</div>
<div class="t serif u sq" style="left:627.30px;top:353.28px;font-size:9.4px;color:#1414b4;width:27.80px;text-align:center;transform-origin:0 7.87px;">O</div>
<div class="t serif u sq" style="left:655.10px;top:353.28px;font-size:9.4px;color:#1414b4;width:15.10px;text-align:center;transform-origin:0 7.87px;">X</div>
<div class="r" style="left:84.20px;top:350.90px;width:586.60px;height:0.80px;background:rgba(70,80,40,0.32);"></div>
<div class="r" style="left:63.00px;top:350.90px;width:20.40px;height:0.80px;background:rgba(70,80,40,0.25);"></div>
<div class="r" style="left:63.00px;top:364.60px;width:20.40px;height:24.20px;background:#fffef8;"></div>
<div class="t serif b sq" style="left:63.00px;top:372.03px;font-size:9.4px;width:19.50px;text-align:center;transform-origin:0 7.87px;">6.</div>
<div class="r" style="left:84.20px;top:364.60px;width:335.00px;height:24.20px;background:#b2f98e;"></div>
<div class="r" style="left:420.80px;top:364.60px;width:250.00px;height:24.20px;background:#b2f98e;"></div>
<div class="r" style="left:504.70px;top:364.60px;width:20.00px;height:24.20px;background:#f2f98e;"></div>
<div class="r" style="left:564.40px;top:364.60px;width:20.70px;height:24.20px;background:#f2f98e;"></div>
<div class="r" style="left:628.20px;top:364.60px;width:27.20px;height:24.20px;background:#f2f98e;"></div>
<div class="r" style="left:656.00px;top:364.60px;width:14.50px;height:24.20px;background:#f2f98e;"></div>
<div class="t serif b u sq" style="left:84.00px;top:372.03px;font-size:9.4px;color:#1414b4;width:18.60px;text-align:center;transform-origin:0 7.87px;">OK</div>
<div class="t serif sq" style="left:105.60px;top:372.03px;font-size:9.4px;transform-origin:0 7.87px;">CERN</div>
<div class="t serif u sq" style="left:190.60px;top:366.73px;font-size:9.4px;color:#1414b4;letter-spacing:0.40px;transform-origin:0 7.87px;">BEIJING-CNIC-</div>
<div class="t serif u sq" style="left:190.60px;top:377.23px;font-size:9.4px;color:#1414b4;letter-spacing:0.33px;transform-origin:0 7.87px;">LCG2-IA64</div>
<div class="t serif u sq" style="left:290.30px;top:372.03px;font-size:9.4px;color:#1414b4;transform-origin:0 7.87px;">ce-lcg.sdg.ac.cn</div>
<div class="t serif b u sq" style="left:423.20px;top:372.03px;font-size:9.4px;color:#1414b4;transform-origin:0 7.87px;">OK</div>
<div class="t serif u sq" style="left:439.80px;top:372.03px;font-size:9.4px;color:#1414b4;width:10.40px;text-align:center;transform-origin:0 7.87px;">O</div>
<div class="t serif u sq" style="left:451.00px;top:372.03px;font-size:9.4px;color:#1414b4;width:27.90px;text-align:center;letter-spacing:0.3px;transform-origin:0 7.87px;">2_6_0</div>
<div class="t serif sq" style="left:478.90px;top:370.03px;font-size:9.4px;width:12.40px;text-align:center;transform-origin:0 7.87px;">-</div>
<div class="t serif u sq" style="left:490.70px;top:372.03px;font-size:9.4px;color:#1414b4;width:13.10px;text-align:center;transform-origin:0 7.87px;">W</div>
<div class="t serif u sq" style="left:503.80px;top:372.03px;font-size:9.4px;color:#1414b4;width:20.60px;text-align:center;transform-origin:0 7.87px;">X</div>
<div class="t serif u sq" style="left:524.40px;top:372.03px;font-size:9.4px;color:#1414b4;width:11.90px;text-align:center;transform-origin:0 7.87px;">O</div>
<div class="t serif u sq" style="left:536.30px;top:372.03px;font-size:9.4px;color:#1414b4;width:14.80px;text-align:center;transform-origin:0 7.87px;">O</div>
<div class="t serif u sq" style="left:551.10px;top:372.03px;font-size:9.4px;color:#1414b4;width:12.40px;text-align:center;transform-origin:0 7.87px;">O</div>
<div class="t serif u sq" style="left:563.50px;top:372.03px;font-size:9.4px;color:#1414b4;width:21.30px;text-align:center;transform-origin:0 7.87px;">X</div>
<div class="t serif u sq" style="left:584.80px;top:372.03px;font-size:9.4px;color:#1414b4;width:20.50px;text-align:center;transform-origin:0 7.87px;">W</div>
<div class="t serif u sq" style="left:605.30px;top:372.03px;font-size:9.4px;color:#1414b4;width:22.00px;text-align:center;transform-origin:0 7.87px;">O</div>
<div class="t serif u sq" style="left:627.30px;top:372.03px;font-size:9.4px;color:#1414b4;width:27.80px;text-align:center;transform-origin:0 7.87px;">X</div>
<div class="t serif u sq" style="left:655.10px;top:372.03px;font-size:9.4px;color:#1414b4;width:15.10px;text-align:center;transform-origin:0 7.87px;">X</div>
<div class="r" style="left:84.20px;top:364.20px;width:586.60px;height:0.80px;background:rgba(70,80,40,0.32);"></div>
<div class="r" style="left:63.00px;top:364.20px;width:20.40px;height:0.80px;background:rgba(70,80,40,0.25);"></div>
<div class="r" style="left:63.00px;top:388.80px;width:20.40px;height:13.20px;background:#fffef8;"></div>
<div class="t serif b sq" style="left:63.00px;top:390.73px;font-size:9.4px;width:19.50px;text-align:center;transform-origin:0 7.87px;">7.</div>
<div class="r" style="left:84.20px;top:388.80px;width:335.00px;height:13.20px;background:#b2f98e;"></div>
<div class="r" style="left:420.80px;top:388.80px;width:250.00px;height:13.20px;background:#b2f98e;"></div>
<div class="r" style="left:504.70px;top:388.80px;width:20.00px;height:13.20px;background:#f2f98e;"></div>
<div class="r" style="left:628.20px;top:388.80px;width:27.20px;height:13.20px;background:#f2f98e;"></div>
<div class="r" style="left:656.00px;top:388.80px;width:14.50px;height:13.20px;background:#f2f98e;"></div>
<div class="t serif b u sq" style="left:84.00px;top:390.73px;font-size:9.4px;color:#1414b4;width:18.60px;text-align:center;transform-origin:0 7.87px;">OK</div>
<div class="t serif sq" style="left:105.60px;top:390.73px;font-size:9.4px;transform-origin:0 7.87px;">CERN</div>
<div class="t serif u sq" style="left:190.60px;top:390.73px;font-size:9.4px;color:#1414b4;letter-spacing:0.31px;transform-origin:0 7.87px;">BEIJING-LCG2</div>
<div class="t serif u sq" style="left:290.30px;top:390.73px;font-size:9.4px;color:#1414b4;transform-origin:0 7.87px;">lcg002.ihep.ac.cn</div>
<div class="t serif b u sq" style="left:423.20px;top:390.73px;font-size:9.4px;color:#1414b4;transform-origin:0 7.87px;">OK</div>
<div class="t serif u sq" style="left:439.80px;top:390.73px;font-size:9.4px;color:#1414b4;width:10.40px;text-align:center;transform-origin:0 7.87px;">O</div>
<div class="t serif u sq" style="left:451.00px;top:390.73px;font-size:9.4px;color:#1414b4;width:27.90px;text-align:center;letter-spacing:0.3px;transform-origin:0 7.87px;">2_6_0</div>
<div class="t serif sq" style="left:478.90px;top:392.23px;font-size:9.4px;width:12.40px;text-align:center;transform-origin:0 7.87px;">-</div>
<div class="t serif u sq" style="left:490.70px;top:390.73px;font-size:9.4px;color:#1414b4;width:13.10px;text-align:center;transform-origin:0 7.87px;">O</div>
<div class="t serif u sq" style="left:503.80px;top:390.73px;font-size:9.4px;color:#1414b4;width:20.60px;text-align:center;transform-origin:0 7.87px;">X</div>
<div class="t serif u sq" style="left:524.40px;top:390.73px;font-size:9.4px;color:#1414b4;width:11.90px;text-align:center;transform-origin:0 7.87px;">O</div>
<div class="t serif u sq" style="left:536.30px;top:390.73px;font-size:9.4px;color:#1414b4;width:14.80px;text-align:center;transform-origin:0 7.87px;">O</div>
<div class="t serif u sq" style="left:551.10px;top:390.73px;font-size:9.4px;color:#1414b4;width:12.40px;text-align:center;transform-origin:0 7.87px;">O</div>
<div class="t serif u sq" style="left:563.50px;top:390.73px;font-size:9.4px;color:#1414b4;width:21.30px;text-align:center;transform-origin:0 7.87px;">O</div>
<div class="t serif u sq" style="left:584.80px;top:390.73px;font-size:9.4px;color:#1414b4;width:20.50px;text-align:center;transform-origin:0 7.87px;">O</div>
<div class="t serif u sq" style="left:605.30px;top:390.73px;font-size:9.4px;color:#1414b4;width:22.00px;text-align:center;transform-origin:0 7.87px;">O</div>
<div class="t serif u sq" style="left:627.30px;top:390.73px;font-size:9.4px;color:#1414b4;width:27.80px;text-align:center;transform-origin:0 7.87px;">X</div>
<div class="t serif u sq" style="left:655.10px;top:390.73px;font-size:9.4px;color:#1414b4;width:15.10px;text-align:center;transform-origin:0 7.87px;">X</div>
<div class="r" style="left:84.20px;top:388.40px;width:586.60px;height:0.80px;background:rgba(70,80,40,0.32);"></div>
<div class="r" style="left:63.00px;top:388.40px;width:20.40px;height:0.80px;background:rgba(70,80,40,0.25);"></div>
<div class="r" style="left:63.00px;top:402.00px;width:20.40px;height:13.00px;background:#fffef8;"></div>
<div class="t serif b sq" style="left:63.00px;top:403.83px;font-size:9.4px;width:19.50px;text-align:center;transform-origin:0 7.87px;">8.</div>
<div class="r" style="left:84.20px;top:402.00px;width:335.00px;height:13.00px;background:#b2f98e;"></div>
<div class="r" style="left:420.80px;top:402.00px;width:250.00px;height:13.00px;background:#b2f98e;"></div>
<div class="r" style="left:656.00px;top:402.00px;width:14.50px;height:13.00px;background:#f2f98e;"></div>
<div class="t serif b u sq" style="left:84.00px;top:403.83px;font-size:9.4px;color:#1414b4;width:18.60px;text-align:center;transform-origin:0 7.87px;">OK</div>
<div class="t serif sq" style="left:105.60px;top:403.83px;font-size:9.4px;transform-origin:0 7.87px;">NorthernEurope</div>
<div class="t serif u sq" style="left:190.60px;top:403.83px;font-size:9.4px;color:#1414b4;letter-spacing:0.20px;transform-origin:0 7.87px;">BelGrid-UCL</div>
<div class="t serif u sq" style="left:290.30px;top:403.83px;font-size:9.4px;color:#1414b4;transform-origin:0 7.87px;">ingrid.cism.ucl.ac.be</div>
<div class="t serif b u sq" style="left:423.20px;top:403.83px;font-size:9.4px;color:#1414b4;transform-origin:0 7.87px;">OK</div>
<div class="t serif u sq" style="left:439.80px;top:403.83px;font-size:9.4px;color:#1414b4;width:10.40px;text-align:center;transform-origin:0 7.87px;">O</div>
<div class="t serif u sq" style="left:451.00px;top:403.83px;font-size:9.4px;color:#1414b4;width:27.90px;text-align:center;letter-spacing:0.3px;transform-origin:0 7.87px;">2_6_0</div>
<div class="t serif sq" style="left:478.90px;top:401.83px;font-size:9.4px;width:12.40px;text-align:center;transform-origin:0 7.87px;">-</div>
<div class="t serif u sq" style="left:490.70px;top:403.83px;font-size:9.4px;color:#1414b4;width:13.10px;text-align:center;transform-origin:0 7.87px;">O</div>
<div class="t serif u sq" style="left:503.80px;top:403.83px;font-size:9.4px;color:#1414b4;width:20.60px;text-align:center;transform-origin:0 7.87px;">O</div>
<div class="t serif u sq" style="left:524.40px;top:403.83px;font-size:9.4px;color:#1414b4;width:11.90px;text-align:center;transform-origin:0 7.87px;">O</div>
<div class="t serif u sq" style="left:536.30px;top:403.83px;font-size:9.4px;color:#1414b4;width:14.80px;text-align:center;transform-origin:0 7.87px;">O</div>
<div class="t serif u sq" style="left:551.10px;top:403.83px;font-size:9.4px;color:#1414b4;width:12.40px;text-align:center;transform-origin:0 7.87px;">O</div>
<div class="t serif u sq" style="left:563.50px;top:403.83px;font-size:9.4px;color:#1414b4;width:21.30px;text-align:center;transform-origin:0 7.87px;">O</div>
<div class="t serif u sq" style="left:584.80px;top:403.83px;font-size:9.4px;color:#1414b4;width:20.50px;text-align:center;transform-origin:0 7.87px;">W</div>
<div class="t serif u sq" style="left:605.30px;top:403.83px;font-size:9.4px;color:#1414b4;width:22.00px;text-align:center;transform-origin:0 7.87px;">O</div>
<div class="t serif u sq" style="left:627.30px;top:403.83px;font-size:9.4px;color:#1414b4;width:27.80px;text-align:center;transform-origin:0 7.87px;">O</div>
<div class="t serif u sq" style="left:655.10px;top:403.83px;font-size:9.4px;color:#1414b4;width:15.10px;text-align:center;transform-origin:0 7.87px;">X</div>
<div class="r" style="left:84.20px;top:401.60px;width:586.60px;height:0.80px;background:rgba(70,80,40,0.32);"></div>
<div class="r" style="left:63.00px;top:401.60px;width:20.40px;height:0.80px;background:rgba(70,80,40,0.25);"></div>
<div class="r" style="left:63.00px;top:415.00px;width:20.40px;height:10.20px;background:#fffef8;"></div>
<div class="t serif b sq" style="left:63.00px;top:417.03px;font-size:9.4px;width:19.50px;text-align:center;transform-origin:0 7.87px;">9.</div>
<div class="r" style="left:84.20px;top:415.00px;width:335.00px;height:10.20px;background:#b2f98e;"></div>
<div class="r" style="left:420.80px;top:415.00px;width:250.00px;height:10.20px;background:#b2f98e;"></div>
<div class="r" style="left:564.40px;top:415.00px;width:20.70px;height:10.20px;background:#f2f98e;"></div>
<div class="t serif b u sq" style="left:84.00px;top:417.03px;font-size:9.4px;color:#1414b4;width:18.60px;text-align:center;transform-origin:0 7.87px;">OK</div>
<div class="t serif sq" style="left:105.60px;top:417.03px;font-size:9.4px;transform-origin:0 7.87px;">SouthEasternEurope</div>
<div class="t serif u sq" style="left:190.60px;top:417.03px;font-size:9.4px;color:#1414b4;letter-spacing:0.38px;transform-origin:0 7.87px;">BG-INRNE</div>
<div class="t serif u sq" style="left:290.30px;top:417.03px;font-size:9.4px;color:#1414b4;transform-origin:0 7.87px;">ce01.inrne.bas.bg</div>
<div class="t serif b u sq" style="left:423.20px;top:417.03px;font-size:9.4px;color:#1414b4;transform-origin:0 7.87px;">OK</div>
<div class="t serif u sq" style="left:439.80px;top:417.03px;font-size:9.4px;color:#1414b4;width:10.40px;text-align:center;transform-origin:0 7.87px;">O</div>
<div class="t serif u sq" style="left:451.00px;top:417.03px;font-size:9.4px;color:#1414b4;width:27.90px;text-align:center;letter-spacing:0.3px;transform-origin:0 7.87px;">2_6_0</div>
<div class="t serif sq" style="left:478.90px;top:415.03px;font-size:9.4px;width:12.40px;text-align:center;transform-origin:0 7.87px;">-</div>
<div class="t serif u sq" style="left:490.70px;top:417.03px;font-size:9.4px;color:#1414b4;width:13.10px;text-align:center;transform-origin:0 7.87px;">O</div>
<div class="t serif u sq" style="left:503.80px;top:417.03px;font-size:9.4px;color:#1414b4;width:20.60px;text-align:center;transform-origin:0 7.87px;">O</div>
<div class="t serif u sq" style="left:524.40px;top:417.03px;font-size:9.4px;color:#1414b4;width:11.90px;text-align:center;transform-origin:0 7.87px;">O</div>
<div class="t serif u sq" style="left:536.30px;top:417.03px;font-size:9.4px;color:#1414b4;width:14.80px;text-align:center;transform-origin:0 7.87px;">O</div>
<div class="t serif u sq" style="left:551.10px;top:417.03px;font-size:9.4px;color:#1414b4;width:12.40px;text-align:center;transform-origin:0 7.87px;">O</div>
<div class="t serif u sq" style="left:563.50px;top:417.03px;font-size:9.4px;color:#1414b4;width:21.30px;text-align:center;transform-origin:0 7.87px;">X</div>
<div class="t serif u sq" style="left:584.80px;top:417.03px;font-size:9.4px;color:#1414b4;width:20.50px;text-align:center;transform-origin:0 7.87px;">O</div>
<div class="t serif u sq" style="left:605.30px;top:417.03px;font-size:9.4px;color:#1414b4;width:22.00px;text-align:center;transform-origin:0 7.87px;">O</div>
<div class="t serif u sq" style="left:627.30px;top:417.03px;font-size:9.4px;color:#1414b4;width:27.80px;text-align:center;transform-origin:0 7.87px;">O</div>
<div class="t serif u sq" style="left:655.10px;top:417.03px;font-size:9.4px;color:#1414b4;width:15.10px;text-align:center;transform-origin:0 7.87px;">O</div>
<div class="r" style="left:84.20px;top:414.60px;width:586.60px;height:0.80px;background:rgba(70,80,40,0.32);"></div>
<div class="r" style="left:63.00px;top:414.60px;width:20.40px;height:0.80px;background:rgba(70,80,40,0.25);"></div>
<div class="r" style="left:63.00px;top:297.80px;width:607.80px;height:1.30px;background:#5b584a;"></div>
<div class="r" style="left:420.60px;top:288.00px;width:250.20px;height:0.90px;background:#8a8674;"></div>
<div class="r" style="left:83.40px;top:276.40px;width:0.90px;height:148.80px;background:#b5b09c;"></div>
<div class="r" style="left:102.60px;top:276.40px;width:1.30px;height:148.80px;background:#6e6a5a;"></div>
<div class="r" style="left:188.20px;top:276.40px;width:0.80px;height:148.80px;background:rgba(70,70,50,0.55);"></div>
<div class="r" style="left:288.20px;top:276.40px;width:0.80px;height:148.80px;background:rgba(70,70,50,0.55);"></div>
<div class="r" style="left:419.00px;top:276.40px;width:1.90px;height:148.80px;background:#55524a;"></div>
<div class="r" style="left:440.20px;top:288.90px;width:0.80px;height:136.30px;background:rgba(60,70,40,0.45);"></div>
<div class="r" style="left:450.60px;top:288.90px;width:0.80px;height:136.30px;background:rgba(60,70,40,0.45);"></div>
<div class="r" style="left:478.50px;top:288.90px;width:0.80px;height:136.30px;background:rgba(60,70,40,0.45);"></div>
<div class="r" style="left:490.90px;top:288.90px;width:0.80px;height:136.30px;background:rgba(60,70,40,0.45);"></div>
<div class="r" style="left:504.00px;top:288.90px;width:0.80px;height:136.30px;background:rgba(60,70,40,0.45);"></div>
<div class="r" style="left:524.60px;top:288.90px;width:0.80px;height:136.30px;background:rgba(60,70,40,0.45);"></div>
<div class="r" style="left:536.50px;top:288.90px;width:0.80px;height:136.30px;background:rgba(60,70,40,0.45);"></div>
<div class="r" style="left:551.30px;top:288.90px;width:0.80px;height:136.30px;background:rgba(60,70,40,0.45);"></div>
<div class="r" style="left:563.70px;top:288.90px;width:0.80px;height:136.30px;background:rgba(60,70,40,0.45);"></div>
<div class="r" style="left:585.00px;top:288.90px;width:0.80px;height:136.30px;background:rgba(60,70,40,0.45);"></div>
<div class="r" style="left:605.50px;top:288.90px;width:0.80px;height:136.30px;background:rgba(60,70,40,0.45);"></div>
<div class="r" style="left:627.50px;top:288.90px;width:0.80px;height:136.30px;background:rgba(60,70,40,0.45);"></div>
<div class="r" style="left:655.30px;top:288.90px;width:0.80px;height:136.30px;background:rgba(60,70,40,0.45);"></div>
<div class="r" style="left:48.00px;top:425.20px;width:647.60px;height:12.40px;background:#d4d0c8;"></div>
<div class="r" style="left:48.00px;top:425.20px;width:647.60px;height:0.70px;background:#8a867c;"></div>
<div class="r" style="left:48.00px;top:425.90px;width:647.60px;height:0.60px;background:#fbfaf6;"></div>
<svg class="r" style="left:49px;top:427px" width="10" height="10" viewBox="0 0 10 10"><path d="M1.2 0.5H6.4L8.6 2.6V9.5H1.2Z" fill="#fff" stroke="#8aa0c0" stroke-width="0.7"/><circle cx="4.6" cy="5.6" r="2.9" fill="#3a78d0"/><path d="M1.6 5.8h6" stroke="#cfe0f6" stroke-width="0.8"/></svg>
<div class="r" style="left:523.80px;top:427.20px;width:15.00px;height:9.60px;background:#d4d0c8;box-shadow:inset 0.6px 0.6px 0 #8a867c, inset -0.6px -0.6px 0 #fff;"></div>
<div class="r" style="left:540.00px;top:427.20px;width:13.00px;height:9.60px;background:#d4d0c8;box-shadow:inset 0.6px 0.6px 0 #8a867c, inset -0.6px -0.6px 0 #fff;"></div>
<div class="r" style="left:555.00px;top:427.20px;width:13.00px;height:9.60px;background:#d4d0c8;box-shadow:inset 0.6px 0.6px 0 #8a867c, inset -0.6px -0.6px 0 #fff;"></div>
<div class="r" style="left:570.00px;top:427.20px;width:13.00px;height:9.60px;background:#d4d0c8;box-shadow:inset 0.6px 0.6px 0 #8a867c, inset -0.6px -0.6px 0 #fff;"></div>
<div class="r" style="left:584.60px;top:427.20px;width:13.40px;height:9.60px;background:#d4d0c8;box-shadow:inset 0.6px 0.6px 0 #8a867c, inset -0.6px -0.6px 0 #fff;"></div>
<div class="r" style="left:600.00px;top:427.20px;width:94.60px;height:9.60px;background:#d4d0c8;box-shadow:inset 0.6px 0.6px 0 #8a867c, inset -0.6px -0.6px 0 #fff;"></div>
<svg class="r" style="left:588px;top:427.6px" width="8" height="9" viewBox="0 0 8 9"><path d="M2 4V2.6A2 2 0 0 1 6 2.6V4" stroke="#8a7a20" stroke-width="1" fill="none"/><rect x="0.8" y="3.8" width="6.4" height="4.8" fill="#f4dc3a" stroke="#a89420" stroke-width="0.5"/></svg>
<svg class="r" style="left:601px;top:427.6px" width="12" height="9" viewBox="0 0 12 9"><rect x="0.6" y="0.6" width="8" height="5.6" fill="#3a8ad8" stroke="#2a4a8a" stroke-width="0.7"/><rect x="2" y="6.6" width="5" height="1.6" fill="#6a7a9a"/><rect x="7" y="3" width="4" height="5.4" fill="#9ab4dc" stroke="#44608a" stroke-width="0.5"/></svg>
<div class="t sans sq" style="left:614.50px;top:429.41px;font-size:6.6px;transform-origin:0 5.59px;">Local intranet</div>
<div class="r" style="left:48.00px;top:437.60px;width:647.60px;height:14.40px;background:#d4d0c8;"></div>
<div class="r" style="left:48.00px;top:437.60px;width:647.60px;height:0.60px;background:#fbfaf6;"></div>
<div class="r" style="left:50.00px;top:439.50px;width:32.00px;height:11.20px;background:#d4d0c8;box-shadow:inset 0.7px 0.7px 0 #fff, inset -0.7px -0.7px 0 #404040;"></div>
<svg class="r" style="left:52px;top:440.8px" width="10" height="9" viewBox="0 0 12 10.5"><path d="M1.2 1.6Q3 0.4 5.2 1.5L4.3 5Q2.4 3.9 0.4 5Z" fill="#e8653a"/><path d="M6.1 1.9Q8.2 2.9 10.6 1.6L9.7 5.1Q7.4 6.3 5.2 5.3Z" fill="#7cc04a"/><path d="M0.2 5.9Q2.2 4.8 4.1 5.9L3.2 9.3Q1.3 8.2 -0.6 9.3Z" fill="#3f7fdc"/><path d="M5 6.2Q7.2 7.2 9.5 6L8.6 9.4Q6.3 10.6 4.1 9.6Z" fill="#f2c230"/></svg>
<div class="t sans b sq" style="left:62.50px;top:442.24px;font-size:6.8px;transform-origin:0 5.76px;">Start</div>
<svg class="r" style="left:92px;top:440.5px" width="9" height="9" viewBox="0 0 9 9"><rect x="0.6" y="0.6" width="7.8" height="7.8" rx="1" fill="#5a8ad0" stroke="#8aaad8" stroke-width="0.6"/><path d="M2.4 6.4l2-3.6l2 3.6" stroke="#fff" stroke-width="0.9" fill="none"/></svg>
<svg class="r" style="left:107px;top:440.3px" width="11" height="10" viewBox="0 0 11 10"><circle cx="5.4" cy="5.2" r="3.9" fill="#3a78d0"/><path d="M0.8 6.6Q5 2 10.4 2.2" stroke="#7aa6e0" stroke-width="1.1" fill="none"/></svg>
<svg class="r" style="left:122px;top:440.5px" width="11" height="9" viewBox="0 0 11 9"><rect x="0.8" y="1.6" width="7" height="5.4" fill="#cfe0f4" stroke="#4a6aa0" stroke-width="0.7"/><circle cx="7.6" cy="5.6" r="2.6" fill="#4a86d4"/></svg>
<div class="t sans b sq" style="left:140.00px;top:441.47px;font-size:7px;transform-origin:0 5.93px;">»</div>
<div class="r" style="left:151.00px;top:439.40px;width:0.70px;height:11.60px;background:#8a867c;"></div>
<div class="r" style="left:151.70px;top:439.40px;width:0.70px;height:11.60px;background:#fff;"></div>
<div class="r" style="left:153.80px;top:439.20px;width:100.00px;height:12.00px;background:#eceae4;background-image:repeating-conic-gradient(#ffffff 0% 25%, #d8d4cc 0% 50%);background-size:2.6px 2.6px;box-shadow:inset 0.7px 0.7px 0 #404040, inset -0.7px -0.7px 0 #fff;"></div>
<svg class="r" style="left:156.3px;top:440.6px" width="10" height="10" viewBox="0 0 11 10"><circle cx="5.4" cy="5.2" r="3.9" fill="#3a78d0"/><path d="M0.8 6.6Q5 2 10.4 2.2" stroke="#7aa6e0" stroke-width="1.1" fill="none"/></svg>
<div class="t sans b sq" style="left:167.50px;top:442.07px;font-size:7px;transform-origin:0 5.93px;">6 Internet Explorer</div>
<svg class="r" style="left:248.5px;top:444.3px" width="5" height="3" viewBox="0 0 5 3"><path d="M0.5 0.3H3.9L2.2 2.4Z" fill="#000"/></svg>
<div class="r" style="left:257.00px;top:439.20px;width:99.30px;height:12.00px;background:#d4d0c8;box-shadow:inset 0.7px 0.7px 0 #fff, inset -0.7px -0.7px 0 #404040;"></div>
<svg class="r" style="left:258.8px;top:441px" width="10" height="9" viewBox="0 0 10 9"><path d="M0.6 1.6H3.8L4.8 2.8H9.4V8.2H0.6Z" fill="#f4dc6a" stroke="#b89a30" stroke-width="0.6"/></svg>
<div class="t sans sq" style="left:271.30px;top:442.24px;font-size:6.8px;transform-origin:0 5.76px;">Y:\mnwh\Pictures\Ane...</div>
<div class="r" style="left:360.00px;top:439.20px;width:100.00px;height:12.00px;background:#d4d0c8;box-shadow:inset 0.7px 0.7px 0 #fff, inset -0.7px -0.7px 0 #404040;"></div>
<svg class="r" style="left:363.6px;top:441px" width="9" height="9" viewBox="0 0 9 9"><rect x="0.5" y="0.5" width="8" height="8" fill="#e8532a" stroke="#a8321a" stroke-width="0.7"/><rect x="2.4" y="2.4" width="4.2" height="4.2" fill="#fbe6d8"/></svg>
<div class="t sans sq" style="left:374.60px;top:442.16px;font-size:6.9px;transform-origin:0 5.84px;">Microsoft PowerPoint - [...</div>
<div class="r" style="left:623.80px;top:438.80px;width:71.00px;height:12.40px;background:#d4d0c8;box-shadow:inset 0.7px 0.7px 0 #8a867c, inset -0.7px -0.7px 0 #fff;"></div>
<div class="t sans b sq" style="left:626.00px;top:441.47px;font-size:7px;transform-origin:0 5.93px;">«</div>
<svg class="r" style="left:633.6px;top:440.4px" width="12" height="10" viewBox="0 0 12 10"><circle cx="5.8" cy="5" r="3.6" fill="none" stroke="#3a3a3a" stroke-width="1.6"/><circle cx="5.8" cy="5" r="1.6" fill="#8aa0c0"/></svg>
<svg class="r" style="left:646px;top:440.4px" width="9" height="10" viewBox="0 0 9 10"><rect x="0.8" y="0.8" width="5.6" height="4.6" fill="#3a6ad0" stroke="#22386a" stroke-width="0.7"/><rect x="3" y="4" width="5.2" height="4.8" fill="#4a7ad8" stroke="#22386a" stroke-width="0.7"/></svg>
<div class="t sans sq" style="left:661.00px;top:442.24px;font-size:6.8px;transform-origin:0 5.76px;">2:52 PM</div>
</div>
<div class="t sans b" id="see" style="left:61.5px;top:462.52px;font-size:16.4px;">See</div>
<a class="t sans b u" id="lnk" style="left:99px;top:462.64px;font-size:16.25px;color:#1c8e8e">https://lcg-sft.cern.ch/sft/lastreport.cgi</a>
<div class="t sans " style="left:43.70px;top:497.15px;font-size:14px;">10/6/2020</div>
<div class="t sans " style="left:200.00px;top:496.81px;font-size:14.05px;width:320.00px;text-align:center;">WLCG Service Availability - Tier2</div>
<div class="t sans " style="left:200.00px;top:514.23px;font-size:13.9px;width:321.00px;text-align:center;">Tutorial: H.Renshall</div>
<div class="t sans " style="left:661.30px;top:497.15px;font-size:14px;">20</div>
</div>
</body></html>
